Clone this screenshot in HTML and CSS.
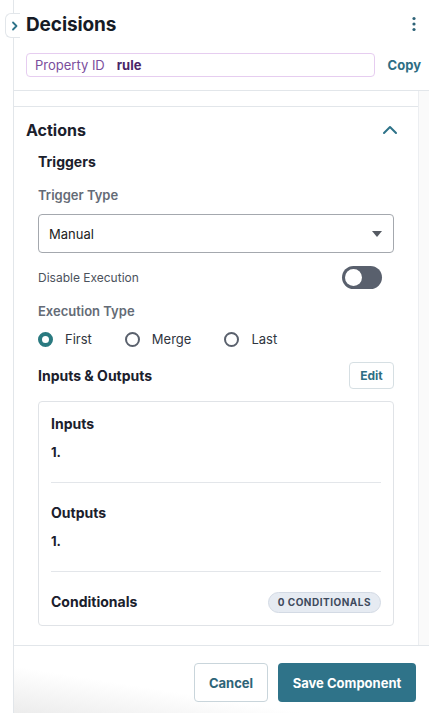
FILE: index.html
```html
<!DOCTYPE html>
<html>
<head>
<meta charset="utf-8">
<link rel="stylesheet" href="styles.css">
</head>
<body>
<div class="app">
  <div class="tab">
    <svg width="8" height="10" viewBox="0 0 8 10"><path d="M2 1.5 L5.5 5 L2 8.5" fill="none" stroke="#2e7389" stroke-width="1.8" stroke-linecap="round" stroke-linejoin="round"/></svg>
  </div>
  <div class="panel">
    <header class="head">
      <div class="title-row">
        <h1 class="title">Decisions</h1>
        <svg class="kebab" width="6" height="16" viewBox="0 0 6 16"><circle cx="3" cy="2.5" r="1.6" fill="#2e6378"/><circle cx="3" cy="8" r="1.6" fill="#2e6378"/><circle cx="3" cy="13.5" r="1.6" fill="#2e6378"/></svg>
      </div>
      <div class="prop-row">
        <div class="prop-box"><span class="prop-label">Property ID</span><span class="prop-val">rule</span></div>
        <span class="copy">Copy</span>
      </div>
    </header>
    <div class="scroll">
      <div class="content">
        <div class="spacer"></div>
        <section class="section">
          <div class="sec-head">
            <h2 class="sec-title">Actions</h2>
            <svg width="16" height="10" viewBox="0 0 16 10"><path d="M2 8 L8 2 L14 8" fill="none" stroke="#2e7389" stroke-width="2" stroke-linecap="round" stroke-linejoin="round"/></svg>
          </div>
          <div class="inner">
            <h3 class="sub">Triggers</h3>
            <div class="label lbl-trigger">Trigger Type</div>
            <div class="select"><span>Manual</span><span class="caret"></span></div>
            <div class="toggle-row">
              <span class="small">Disable Execution</span>
              <span class="toggle"><span class="knob"></span></span>
            </div>
            <div class="label lbl-exec">Execution Type</div>
            <div class="radios">
              <span class="radio-item"><span class="radio on"></span>First</span>
              <span class="radio-item"><span class="radio"></span>Merge</span>
              <span class="radio-item"><span class="radio"></span>Last</span>
            </div>
            <div class="io-row">
              <h3 class="sub">Inputs &amp; Outputs</h3>
              <span class="edit">Edit</span>
            </div>
            <div class="card">
              <div class="card-title">Inputs</div>
              <div class="item">1.</div>
              <div class="divider"></div>
              <div class="card-title">Outputs</div>
              <div class="item">1.</div>
              <div class="divider"></div>
              <div class="cond-row">
                <div class="card-title">Conditionals</div>
                <span class="badge">0 CONDITIONALS</span>
              </div>
            </div>
          </div>
        </section>
      </div>
      <div class="gutter"></div>
    </div>
    <footer class="foot">
      <button class="btn cancel">Cancel</button>
      <button class="btn save">Save Component</button>
    </footer>
  </div>
</div>
</body>
</html>
```

FILE: styles.css
```css
* { box-sizing: border-box; }
html, body { margin: 0; padding: 0; }
body {
  width: 429px;
  height: 713px;
  overflow: hidden;
  background: #fff;
  font-family: Inter, "Noto Sans", sans-serif;
  color: #1c2330;
}
.app {
  position: relative;
  height: 713px;
  padding-left: 13px;
}
.tab {
  position: absolute;
  left: 5px;
  top: 13px;
  width: 15px;
  height: 25px;
  background: #fff;
  border: 1px solid #e2e6ea;
  border-right: none;
  border-radius: 6px 0 0 6px;
  display: flex;
  align-items: center;
  justify-content: center;
  padding-left: 3px;
}
.panel {
  height: 713px;
  border-left: 1px solid #e2e6ea;
  display: flex;
  flex-direction: column;
}
.head {
  padding: 10px 8px 0 12px;
  height: 91px;
  border-bottom: 1px solid #e2e6ea;
  flex: none;
}
.title-row {
  display: flex;
  align-items: center;
  justify-content: space-between;
  height: 28px;
}
.title {
  margin: 0;
  font-size: 19px;
  font-weight: 700;
  color: #161b26;
  letter-spacing: -0.1px;
}
.kebab { margin-right: 4px; }
.prop-row {
  display: flex;
  align-items: center;
  margin-top: 15px;
}
.prop-box {
  width: 349px;
  height: 24px;
  border: 1px solid #e6cdf0;
  border-radius: 4px;
  display: flex;
  align-items: center;
  padding-left: 8px;
  font-size: 13px;
}
.prop-label { color: #7a4d9c; margin-right: 12px; }
.prop-val { color: #4a2568; font-weight: 700; }
.copy {
  margin-left: 13px;
  font-size: 13px;
  font-weight: 700;
  color: #2e6e84;
}
.scroll {
  flex: 1;
  display: flex;
  min-height: 0;
  border-bottom: 1px solid #e2e6ea;
}
.content { flex: 1; }
.gutter {
  width: 11px;
  border-left: 1px solid #eceef1;
  background: #fafafa;
}
.spacer { height: 15px; }
.section {
  border-top: 1px solid #e2e6ea;
  padding: 13px 20px 0 12px;
}
.sec-head {
  display: flex;
  align-items: center;
  justify-content: space-between;
  height: 20px;
}
.sec-title {
  margin: 0;
  font-size: 16px;
  font-weight: 700;
  color: #1a202c;
}
.inner {
  padding: 0 4px 0 12px;
  display: flex;
  flex-direction: column;
}
.sub {
  margin: 12px 0 0;
  font-size: 14px;
  font-weight: 700;
  line-height: 20px;
  color: #1a202c;
}
.label {
  font-size: 13px;
  font-weight: 600;
  color: #646b76;
  line-height: 18px;
}
.lbl-trigger { margin-top: 14px; }
.select {
  margin-top: 10px;
  height: 39px;
  border: 1px solid #a4a8ae;
  border-radius: 4px;
  display: flex;
  align-items: center;
  justify-content: space-between;
  padding: 0 11px 0 10px;
  font-size: 13px;
  color: #222;
}
.caret {
  width: 0; height: 0;
  border-left: 5px solid transparent;
  border-right: 5px solid transparent;
  border-top: 6px solid #555a62;
}
.toggle-row {
  margin-top: 12px;
  display: flex;
  align-items: center;
  justify-content: space-between;
  height: 24px;
  padding-right: 12px;
}
.small { font-size: 12px; color: #4b525c; }
.toggle {
  width: 40px;
  height: 23px;
  border-radius: 12px;
  background: #59606d;
  display: flex;
  align-items: center;
  padding-left: 3px;
}
.knob {
  width: 17px; height: 17px;
  border-radius: 50%;
  background: #fff;
}
.lbl-exec { margin-top: 13px; }
.radios {
  margin-top: 9px;
  display: flex;
  align-items: center;
  height: 20px;
  font-size: 13px;
  color: #2f3540;
}
.radio-item {
  display: flex;
  align-items: center;
  gap: 12px;
  margin-right: 33px;
}
.radio {
  width: 15px; height: 15px;
  border-radius: 50%;
  border: 2px solid #5a616d;
}
.radio.on { border: 4.5px solid #2a7a80; }
.io-row {
  margin-top: 13px;
  display: flex;
  align-items: center;
  justify-content: space-between;
  height: 27px;
}
.io-row .sub { margin: 0; }
.edit {
  width: 45px;
  height: 27px;
  border: 1px solid #d6dfe3;
  border-radius: 4px;
  display: flex;
  align-items: center;
  justify-content: center;
  font-size: 12px;
  font-weight: 700;
  color: #2e6e84;
}
.card {
  margin-top: 12px;
  border: 1px solid #e0e3e7;
  border-radius: 4px;
  padding: 12px 12px 12px 12px;
}
.card-title {
  font-size: 14px;
  font-weight: 700;
  line-height: 20px;
  color: #1a202c;
}
.item {
  margin-top: 8px;
  font-size: 13px;
  font-weight: 700;
  line-height: 20px;
  color: #1a202c;
}
.divider {
  margin: 20px 0 20px;
  height: 1px;
  background: #e3e6ea;
}
.cond-row {
  display: flex;
  align-items: center;
  justify-content: space-between;
  height: 22px;
  margin-top: -1px;
}
.badge {
  height: 21px;
  padding: 0 9px;
  border-radius: 11px;
  background: #e6ebf2;
  border: 1px solid #d3dae4;
  display: flex;
  align-items: center;
  font-size: 10px;
  font-weight: 700;
  letter-spacing: 0.5px;
  color: #3e4a5d;
}
.foot {
  flex: none;
  height: 67px;
  display: flex;
  justify-content: flex-end;
  align-items: flex-start;
  gap: 10px;
  padding: 17px 13px 0 0;
  background: linear-gradient(to top right, #ececec 0%, #fff 35%);
}
.btn {
  height: 39px;
  border-radius: 4px;
  font-family: Inter, "Noto Sans", sans-serif;
  font-size: 13px;
  font-weight: 700;
  cursor: pointer;
}
.cancel {
  width: 74px;
  background: #fff;
  border: 1.5px solid #c9d5db;
  color: #2e6478;
}
.save {
  width: 138px;
  background: #2f7389;
  border: none;
  color: #fff;
}
```
